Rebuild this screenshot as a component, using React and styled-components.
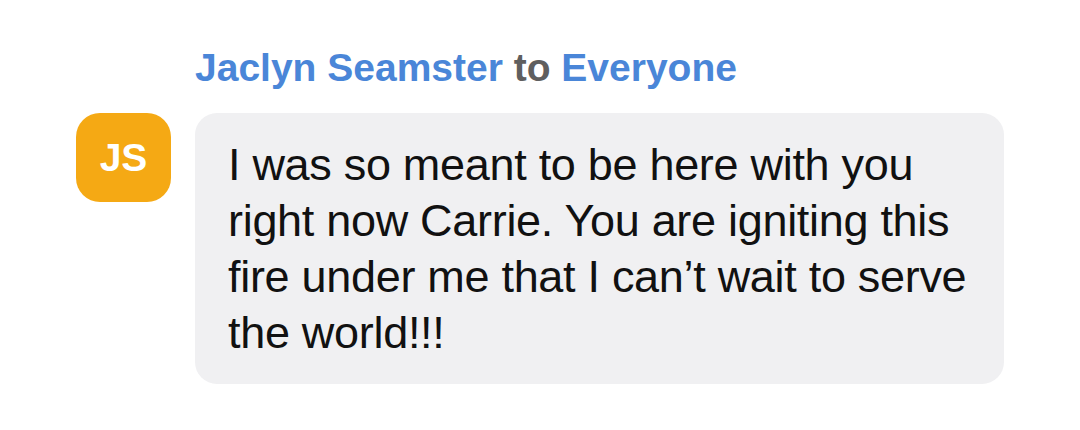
import React from "react";
import styled, { createGlobalStyle } from "styled-components";

const Global = createGlobalStyle`
  html, body { margin: 0; padding: 0; background: #ffffff; }
  body { font-family: "Liberation Sans", Arial, sans-serif; }
`;

const Page = styled.div`
  width: 1080px;
  height: 430px;
  box-sizing: border-box;
  padding: 44px 0 0 76px;
  background: #fff;
`;

const Header = styled.div`
  margin-left: 119px;
  font-size: 39px;
  font-weight: 700;
  line-height: 48px;
  color: #5f5f5f;
`;

const Name = styled.span`
  color: #4a86d8;
`;

const Row = styled.div`
  display: flex;
  align-items: flex-start;
  gap: 24px;
  margin-top: 21px;
`;

const Avatar = styled.div`
  width: 95px;
  height: 89px;
  border-radius: 24px;
  background: #f5a914;
  color: #fff;
  font-size: 39px;
  font-weight: 700;
  display: flex;
  align-items: center;
  justify-content: center;
  flex-shrink: 0;
`;

const Bubble = styled.div`
  width: 809px;
  box-sizing: border-box;
  background: #f0f0f2;
  border-radius: 22px;
  padding: 24px 20px 23px 33px;
  font-size: 45px;
  line-height: 56px;
  color: #111;
  letter-spacing: -0.3px;
`;

export default function App() {
  return (
    <>
      <Global />
      <Page>
        <Header>
          <Name>Jaclyn Seamster</Name> to <Name>Everyone</Name>
        </Header>
        <Row>
          <Avatar>JS</Avatar>
          <Bubble>
            I was so meant to be here with you
            <br />
            right now Carrie. You are igniting this
            <br />
            fire under me that I can’t wait to serve
            <br />
            the world!!!
          </Bubble>
        </Row>
      </Page>
    </>
  );
}
